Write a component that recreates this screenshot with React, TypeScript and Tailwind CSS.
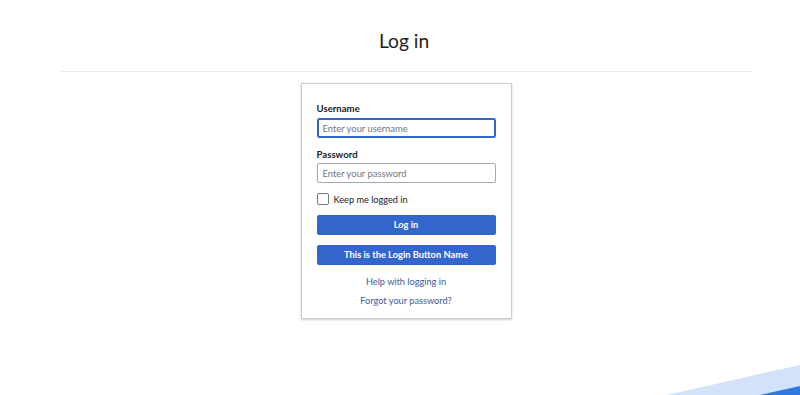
import React from "react";

function Wave() {
  return (
    <svg
      className="absolute bottom-0 right-0"
      width="135"
      height="30"
      viewBox="0 0 135 30"
    >
      <polygon points="2,30 135,0 135,30" fill="#d2e2f9" />
      <polygon points="95,30 135,21 135,30" fill="#2f7ae0" />
    </svg>
  );
}

export default function App() {
  return (
    <div
      className="relative h-[395px] w-[800px] overflow-hidden bg-white text-[#202122]"
      style={{ fontFamily: "Lato, 'Noto Sans', sans-serif" }}
    >
      {/* Header */}
      <div className="ml-[60px] mr-[48px] border-b border-[#eaecf0] pt-[26px] pb-[15px]">
        <h1 className="-translate-x-[2px] text-center text-[19.2px] leading-[30px] font-normal">Log in</h1>
      </div>

      {/* Card */}
      <div className="mx-auto mt-[11px] w-[211px] translate-x-[6px] border border-[#c8ccd1] bg-white px-[15px] pt-[18px] pb-[10px] shadow-[0_1px_2px_rgba(0,0,0,0.2)]">
        <label className="block text-[9.6px] font-bold leading-[14px]">Username</label>
        <input
          className="mt-[2px] block h-[20px] w-full rounded-[2px] border border-[#36c] px-[5px] text-[9.4px] shadow-[inset_0_0_0_1px_#36c] outline-none placeholder:text-[#72777d]"
          placeholder="Enter your username"
        />

        <label className="mt-[10px] block text-[9.6px] font-bold leading-[14px]">Password</label>
        <input
          type="password"
          className="mt-[1px] block h-[20px] w-full rounded-[2px] border border-[#a2a9b1] px-[5px] text-[9.4px] outline-none placeholder:text-[#72777d]"
          placeholder="Enter your password"
        />

        <div className="mt-[10px] flex items-center gap-[5px]">
          <span className="block h-[12px] w-[12px] rounded-[2px] border border-[#72777d] bg-white" />
          <span className="translate-y-[1px] text-[9.2px] leading-[12px]">Keep me logged in</span>
        </div>

        <button className="mt-[10px] block h-[20px] w-full rounded-[2px] bg-[#36c] text-[9.3px] font-bold text-white">
          Log in
        </button>
        <button className="mt-[10px] block h-[20px] w-full rounded-[2px] bg-[#36c] text-[9.3px] font-bold text-white">
          This is the Login Button Name
        </button>

        <div className="mt-[10px] text-center text-[9.2px] leading-[14px] text-[#3d5aa0]">
          <a className="block">Help with logging in</a>
          <a className="mt-[5px] block">Forgot your password?</a>
        </div>
      </div>

      <Wave />
    </div>
  );
}
